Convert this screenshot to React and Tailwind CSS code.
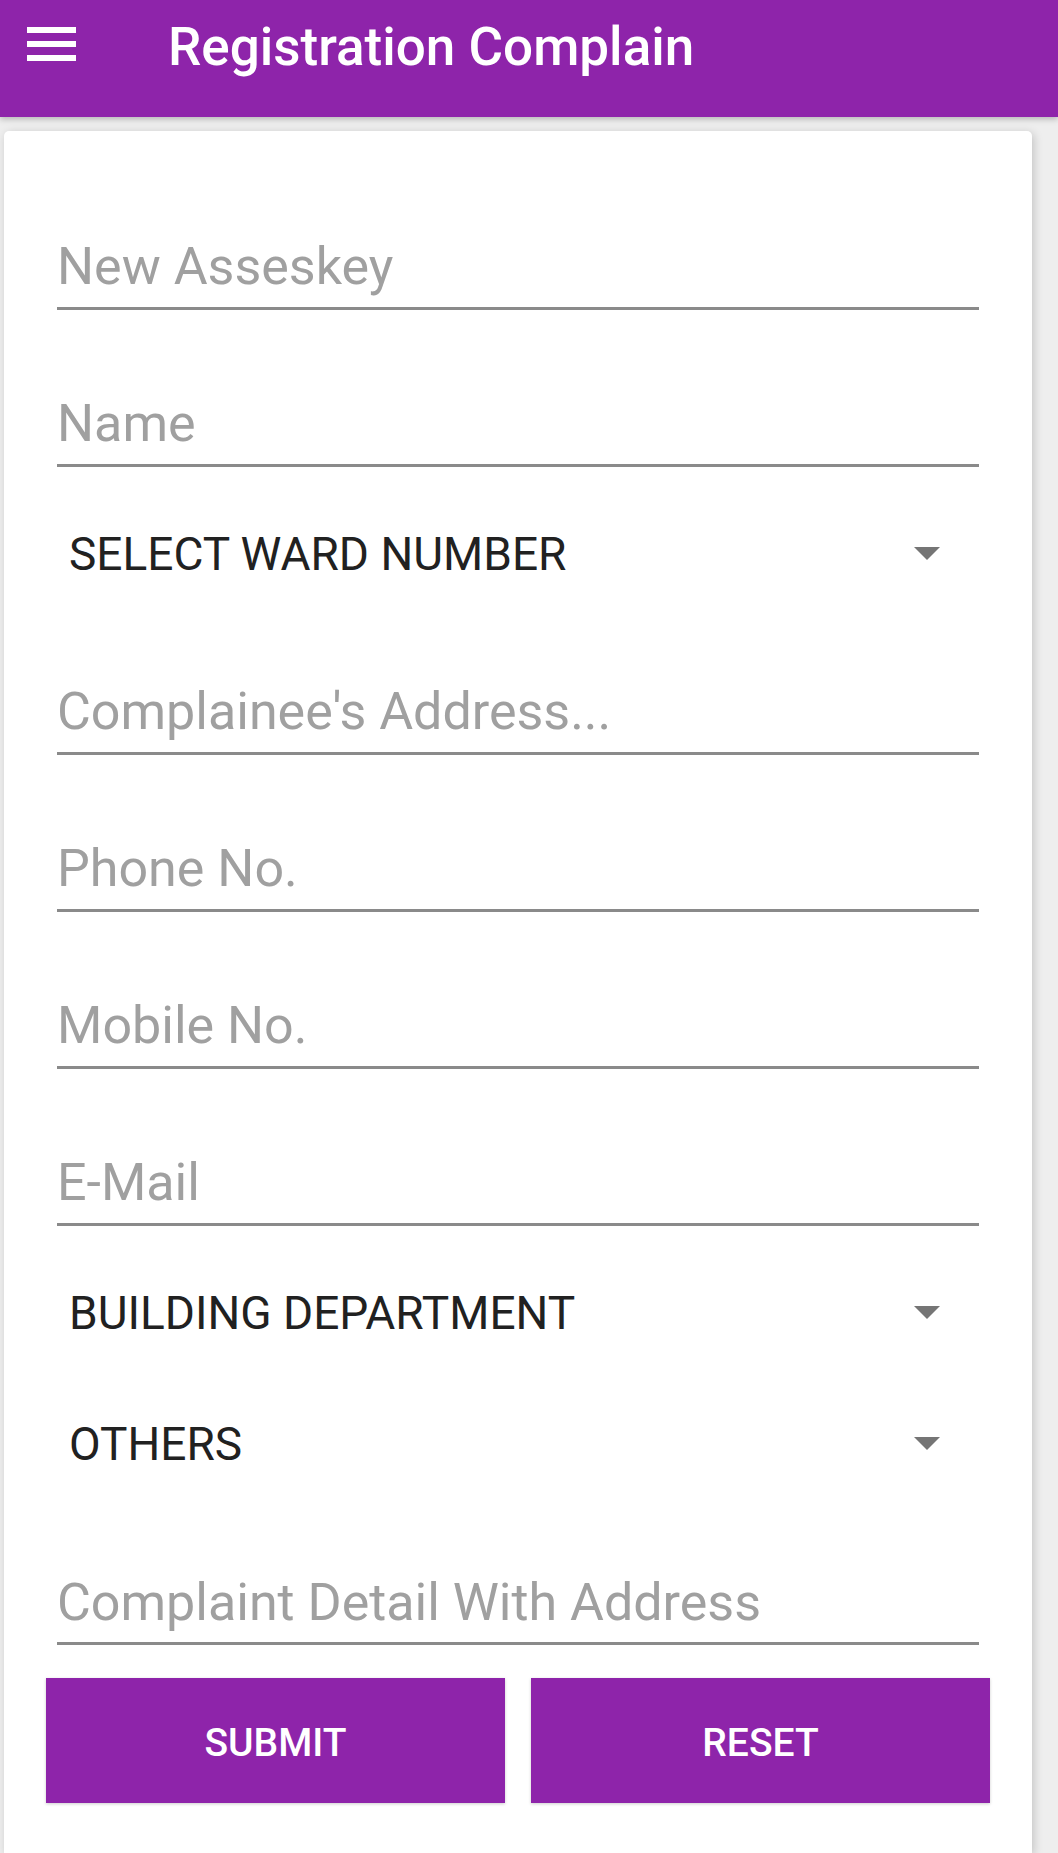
const FIELDS_TOP = ["New Asseskey", "Name"];
const FIELDS_MID = ["Complainee's Address...", "Phone No.", "Mobile No.", "E-Mail"];

function TextField({ label, pb = "pb-[14px]" }) {
  return (
    <div className="flex h-[157px] flex-col justify-end px-[53px]">
      <div className={`border-b-[3px] border-[#8a8a8a] ${pb}`}>
        <span className="block text-[52px] leading-[52px] text-[#a0a0a0]">{label}</span>
      </div>
    </div>
  );
}

function Select({ label }) {
  return (
    <div className="relative h-[131px] pl-[65px] pr-[92px] pt-[61px]">
      <span className="block text-[46px] leading-[52px] text-[#212121]">{label}</span>
      <svg
        className="absolute right-[92px] top-[80px]"
        width="26"
        height="13"
        viewBox="0 0 26 13"
      >
        <path d="M0 0 L26 0 L13 13 Z" fill="#757575" />
      </svg>
    </div>
  );
}

export default function App() {
  return (
    <div
      className="min-h-[1853px] w-[1058px] bg-[#eeeeee]"
      style={{ fontFamily: "Roboto, 'Noto Sans', sans-serif" }}
    >
      <header className="flex h-[117px] items-start bg-[#8e24aa] shadow-[0_2px_6px_rgba(0,0,0,0.25)]">
        <button type="button" aria-label="Open menu" className="ml-[27px] mt-[27px] flex flex-col gap-[8px]">
          <span className="block h-[6px] w-[49px] bg-white" />
          <span className="block h-[6px] w-[49px] bg-white" />
          <span className="block h-[6px] w-[49px] bg-white" />
        </button>
        <h1 className="ml-[92px] mt-[21px] text-[53px] font-medium leading-[53px] text-white">
          Registration Complain
        </h1>
      </header>

      <main className="ml-[4px] mt-[14px] min-h-[1722px] w-[1028px] rounded-t-[5px] bg-white pt-[22px] shadow-[2px_2px_10px_rgba(0,0,0,0.18)]">
        {FIELDS_TOP.map((f) => (
          <TextField key={f} label={f} />
        ))}
        <Select label="SELECT WARD NUMBER" />
        {FIELDS_MID.map((f) => (
          <TextField key={f} label={f} />
        ))}
        <Select label="BUILDING DEPARTMENT" />
        <Select label="OTHERS" />
        <TextField label="Complaint Detail With Address" pb="pb-[13px]" />

        <div className="mt-[33px] flex gap-[26px] px-[42px]">
          <button
            type="button"
            className="flex h-[125px] flex-1 items-center justify-center bg-[#8e24aa] pt-[5px] text-[39px] font-medium text-white shadow-[0_1px_3px_rgba(0,0,0,0.2)]"
          >
            SUBMIT
          </button>
          <button
            type="button"
            className="flex h-[125px] flex-1 items-center justify-center bg-[#8e24aa] pt-[5px] text-[39px] font-medium text-white shadow-[0_1px_3px_rgba(0,0,0,0.2)]"
          >
            RESET
          </button>
        </div>
      </main>
    </div>
  );
}
